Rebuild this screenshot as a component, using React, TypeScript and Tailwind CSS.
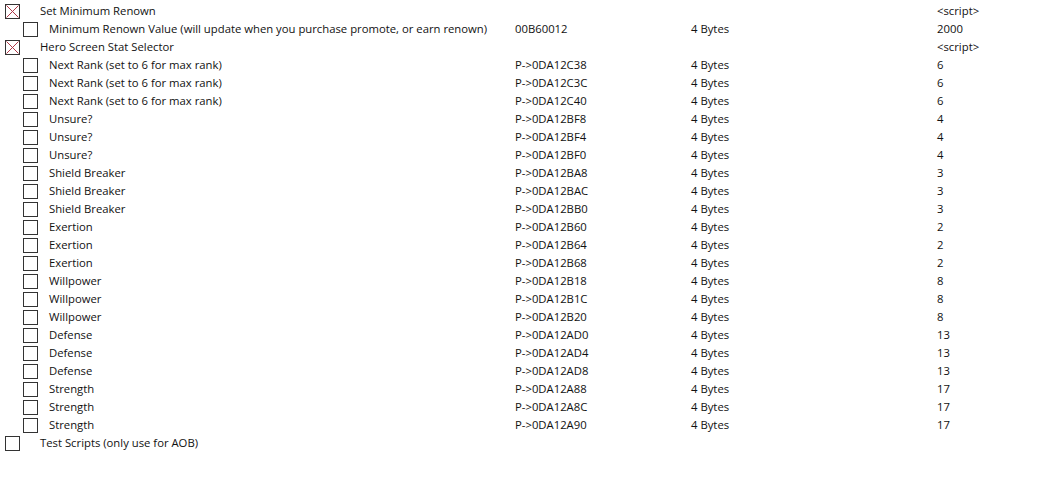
type Row = {
  desc: string
  addr?: string
  type?: string
  value?: string
  level: 0 | 1
  checked?: boolean
}

const rows: Row[] = [
  { desc: "Set Minimum Renown", value: "<script>", level: 0, checked: true },
  {
    desc: "Minimum Renown Value (will update when you purchase promote, or earn renown)",
    addr: "00B60012",
    type: "4 Bytes",
    value: "2000",
    level: 1,
  },
  { desc: "Hero Screen Stat Selector", value: "<script>", level: 0, checked: true },
  { desc: "Next Rank (set to 6 for max rank)", addr: "P->0DA12C38", type: "4 Bytes", value: "6", level: 1 },
  { desc: "Next Rank (set to 6 for max rank)", addr: "P->0DA12C3C", type: "4 Bytes", value: "6", level: 1 },
  { desc: "Next Rank (set to 6 for max rank)", addr: "P->0DA12C40", type: "4 Bytes", value: "6", level: 1 },
  { desc: "Unsure?", addr: "P->0DA12BF8", type: "4 Bytes", value: "4", level: 1 },
  { desc: "Unsure?", addr: "P->0DA12BF4", type: "4 Bytes", value: "4", level: 1 },
  { desc: "Unsure?", addr: "P->0DA12BF0", type: "4 Bytes", value: "4", level: 1 },
  { desc: "Shield Breaker", addr: "P->0DA12BA8", type: "4 Bytes", value: "3", level: 1 },
  { desc: "Shield Breaker", addr: "P->0DA12BAC", type: "4 Bytes", value: "3", level: 1 },
  { desc: "Shield Breaker", addr: "P->0DA12BB0", type: "4 Bytes", value: "3", level: 1 },
  { desc: "Exertion", addr: "P->0DA12B60", type: "4 Bytes", value: "2", level: 1 },
  { desc: "Exertion", addr: "P->0DA12B64", type: "4 Bytes", value: "2", level: 1 },
  { desc: "Exertion", addr: "P->0DA12B68", type: "4 Bytes", value: "2", level: 1 },
  { desc: "Willpower", addr: "P->0DA12B18", type: "4 Bytes", value: "8", level: 1 },
  { desc: "Willpower", addr: "P->0DA12B1C", type: "4 Bytes", value: "8", level: 1 },
  { desc: "Willpower", addr: "P->0DA12B20", type: "4 Bytes", value: "8", level: 1 },
  { desc: "Defense", addr: "P->0DA12AD0", type: "4 Bytes", value: "13", level: 1 },
  { desc: "Defense", addr: "P->0DA12AD4", type: "4 Bytes", value: "13", level: 1 },
  { desc: "Defense", addr: "P->0DA12AD8", type: "4 Bytes", value: "13", level: 1 },
  { desc: "Strength", addr: "P->0DA12A88", type: "4 Bytes", value: "17", level: 1 },
  { desc: "Strength", addr: "P->0DA12A8C", type: "4 Bytes", value: "17", level: 1 },
  { desc: "Strength", addr: "P->0DA12A90", type: "4 Bytes", value: "17", level: 1 },
  { desc: "Test Scripts (only use for AOB)", level: 0 },
]

function CheckBox({ checked }: { checked?: boolean }) {
  return (
    <div className="relative w-[15px] h-[15px] border border-[#333] bg-white shrink-0">
      {checked && (
        <svg className="absolute inset-0" width="13" height="13" viewBox="0 0 13 13">
          <path d="M0.5 0.5 L12.5 12.5 M12.5 0.5 L0.5 12.5" stroke="#b03848" strokeWidth="1" />
        </svg>
      )}
    </div>
  )
}

export default function App() {
  return (
    <div
      className="w-[1053px] h-[479px] bg-white text-[#111] text-[11.3px] pt-[2px] overflow-hidden"
      style={{ fontFamily: '"Open Sans", "Noto Sans", sans-serif' }}
    >
      {rows.map((r, i) => (
        <div key={i} className="grid grid-cols-[515px_176px_246px_1fr] h-[18px] items-center">
          {r.level === 0 ? (
            <div className="flex items-center pl-[5px]">
              <CheckBox checked={r.checked} />
              <span className="ml-[20px] pt-[1px] whitespace-nowrap">{r.desc}</span>
            </div>
          ) : (
            <div className="flex items-center pl-[23px]">
              <CheckBox checked={r.checked} />
              <span className="ml-[11px] pt-[1px] whitespace-nowrap">{r.desc}</span>
            </div>
          )}
          <span className="pt-[1px] whitespace-nowrap">{r.addr}</span>
          <span className="pt-[1px] whitespace-nowrap">{r.type}</span>
          <span className="pt-[1px] whitespace-nowrap">{r.value}</span>
        </div>
      ))}
    </div>
  )
}
